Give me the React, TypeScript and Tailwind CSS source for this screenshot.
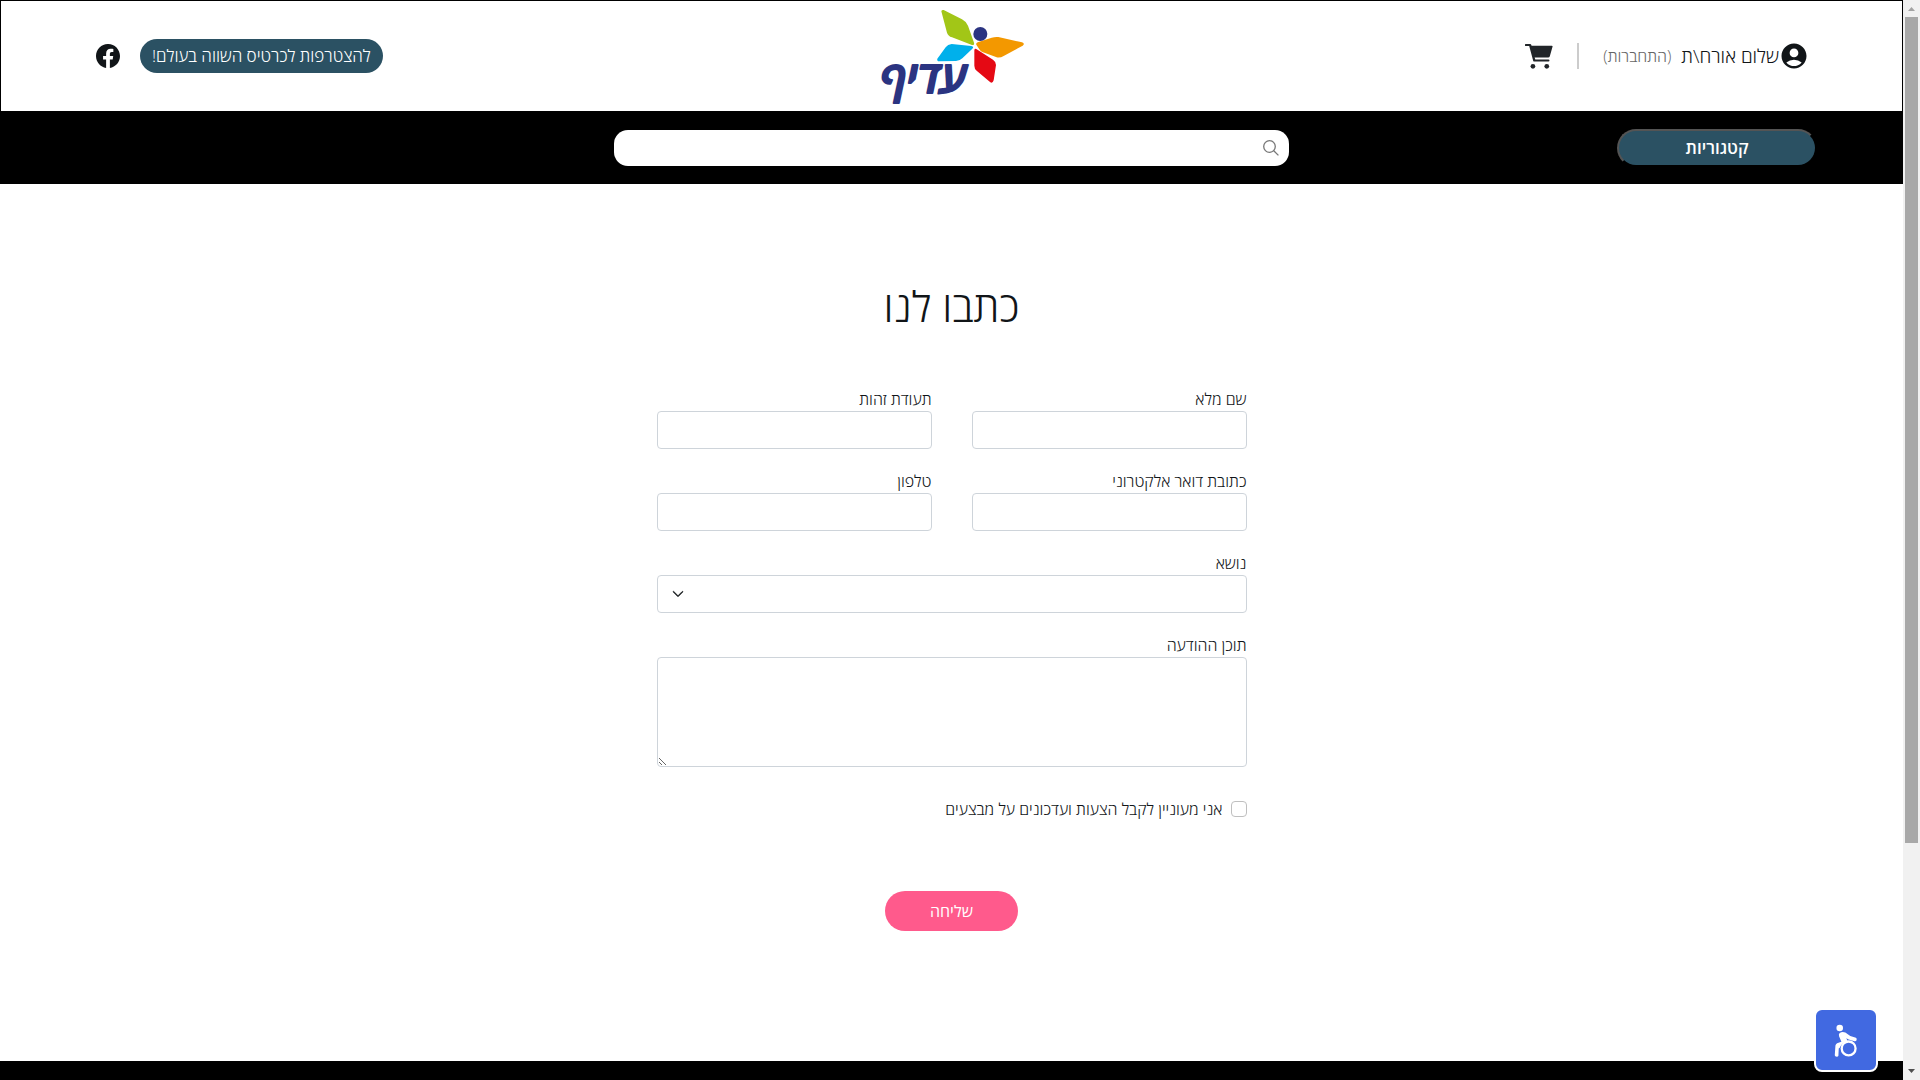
import type { ReactNode } from "react";
import { BsChevronDown, BsFacebook } from "react-icons/bs";
import { MdAccountCircle } from "react-icons/md";

const inputClass =
  "block w-full rounded border border-[#ced4da] bg-white px-3 focus:outline-none focus:ring-2 focus:ring-sky-300";

interface FieldProps {
  id: string;
  label: string;
  className?: string;
  children: ReactNode;
}

function Field({ id, label, className, children }: FieldProps) {
  return (
    <div className={className}>
      <label htmlFor={id} className="block leading-6">
        {label}
      </label>
      {children}
    </div>
  );
}

function Logo() {
  return (
    <svg viewBox="48 24 456 288" className="h-24 w-[152px] overflow-visible" role="img" aria-label="עדיף">
      <path d="M244 34Q245 29 251 30L306 58Q319 65 324 77L342 128Q344 136 336 135L276 112Q264 108 261 98Z" fill="#a2c617" />
      <path d="M232 176L257 142Q263 133 275 132L334 138Q343 140 337 146L307 175Q299 183 288 183L237 184Q230 183 232 176Z" fill="#00b0eb" />
      <path d="M349 134Q347 130 353 127L395 113Q405 110 415 111L486 127Q496 131 488 137L431 168Q421 174 410 172L369 157Q362 154 359 149Z" fill="#f39800" />
      <path d="M343 151Q344 144 350 148L399 179Q408 185 408 195L401 241Q398 251 391 247L350 212Q343 206 343 197Z" fill="#e50914" />
      <circle cx="361" cy="102" r="21" fill="#2b3481" />
      <text
        x="191"
        y="278"
        textAnchor="middle"
        direction="rtl"
        fill="#2b3481"
        stroke="#2b3481"
        strokeWidth="6"
        strokeLinejoin="round"
        className="font-['Open_Sans',sans-serif] text-[130px] font-semibold italic"
      >
        עדיף
      </text>
    </svg>
  );
}

function CartIcon() {
  return (
    <svg viewBox="76 71 82 74" className="h-[25px] w-7" fill="#212529">
      <path d="M78 71H91Q93 71 94 73L95 76H155Q158 76 157 79L149 107Q148 111 144 111H104L106 117H145Q148 117 148 120T145 123H103Q101 123 100 121L88 77H78Q75 77 75 74T78 71Z" />
      <circle cx="99" cy="137" r="7" />
      <circle cx="140" cy="137" r="7" />
    </svg>
  );
}

function WheelchairIcon() {
  return (
    <svg viewBox="166 130 72 100" className="h-[33px] w-6" fill="#fff">
      <circle cx="183" cy="142" r="10" />
      <path d="M183 157Q191 152 200 156L215 166L232 172Q236 175 234 179T228 182L210 177L203 173L207 182Q190 185 183 202L180 204L179 226Q178 229 174 229Q168 229 168 225L170 195Q171 190 175 188L188 184L181 167Q179 160 183 157Z" />
      <circle cx="210" cy="204" r="21" fill="none" stroke="#fff" strokeWidth="7" />
    </svg>
  );
}

function Header() {
  return (
    <header className="grid h-[111px] grid-cols-[1fr_auto_1fr] items-center border border-b-0 border-black px-[95px]">
      <div className="flex items-center">
        <a href="#login" className="flex items-center gap-[10px] font-light">
          <span className="flex items-center text-[19px] leading-6">
            <MdAccountCircle className="-mr-0.5 size-[30px]" />
            שלום אורח\ת
          </span>
          <span className="text-[#666]">(התחברות)</span>
        </a>
        <span className="mx-6 h-[26px] w-0.5 bg-[#ccc]" />
        <a href="#cart" aria-label="עגלת קניות">
          <CartIcon />
        </a>
      </div>
      <Logo />
      <div className="flex items-center justify-end gap-5">
        <a href="#join" className="rounded-full bg-[#2b5163] px-3 py-[5px] text-[17px] leading-6 font-light text-white">
          להצטרפות לכרטיס השווה בעולם!
        </a>
        <a href="#facebook" aria-label="פייסבוק">
          <BsFacebook className="size-6" />
        </a>
      </div>
    </header>
  );
}

function NavBar() {
  return (
    <nav className="grid h-[73px] grid-cols-[1fr_675px_1fr] items-center bg-black px-[86px]">
      <div>
        <button
          type="button"
          className="h-[38px] w-[200px] rounded-full border-2 border-black bg-[#2b5163] text-[17px] leading-6 font-semibold text-white [border-style:outset]"
        >
          קטגוריות
        </button>
      </div>
      <form className="flex h-9 items-center rounded-[14px] bg-white pr-2.5 pl-4">
        <svg viewBox="0 0 16 16" className="size-4" fill="none" stroke="#777" strokeWidth="1.3">
          <ellipse cx="6.5" cy="6.5" rx="5.8" ry="5.8" />
          <path d="M10.5 10.5L15.4 15.4" />
        </svg>
        <input type="search" aria-label="חיפוש" className="h-full flex-1 px-2 focus:outline-none" />
      </form>
    </nav>
  );
}

function ContactForm() {
  return (
    <main className="flex flex-1 flex-col items-center pt-[92px] pb-[130px]">
      <h1 className="mb-[51px] text-[42px] leading-[60px] font-light">כתבו לנו</h1>
      <form className="flex w-[590px] flex-col items-center">
        <div className="grid w-full grid-cols-2 gap-x-10 gap-y-5 font-light">
          <Field id="name" label="שם מלא">
            <input id="name" type="text" className={`${inputClass} h-[38px]`} />
          </Field>
          <Field id="idNumber" label="תעודת זהות">
            <input id="idNumber" type="text" className={`${inputClass} h-[38px]`} />
          </Field>
          <Field id="email" label="כתובת דואר אלקטרוני">
            <input id="email" type="email" className={`${inputClass} h-[38px]`} />
          </Field>
          <Field id="phone" label="טלפון">
            <input id="phone" type="tel" className={`${inputClass} h-[38px]`} />
          </Field>
          <Field id="subject" label="נושא" className="col-span-2">
            <div className="relative">
              <select id="subject" className={`${inputClass} h-[38px] appearance-none`}>
                <option></option>
              </select>
              <BsChevronDown className="pointer-events-none absolute top-[13px] left-[15px] size-3 stroke-1" />
            </div>
          </Field>
          <Field id="message" label="תוכן ההודעה" className="col-span-2">
            <textarea id="message" className={`${inputClass} h-[110px] resize py-1.5`} />
          </Field>
        </div>
        <label className="mt-[30px] flex items-center gap-2 self-start leading-6 font-light">
          <input
            type="checkbox"
            className="size-4 appearance-none rounded border border-[#bfbfbf] bg-white checked:bg-sky-500"
          />
          אני מעוניין לקבל הצעות ועדכונים על מבצעים
        </label>
        <button type="submit" className="mt-[70px] h-10 w-[133px] rounded-full bg-[#ff5a8c] leading-6 text-white">
          שליחה
        </button>
      </form>
    </main>
  );
}

function ScrollBar() {
  return (
    <div className="flex w-[17px] shrink-0 flex-col items-center bg-[#f1f1f1]" aria-hidden="true">
      <svg viewBox="0 0 17 17" className="size-[17px]" fill="#a3a3a3">
        <path d="M5 11L8.500 7L12 11Z" />
      </svg>
      <div className="w-[13px] flex-[826] bg-[#a8a8a8]" />
      <div className="flex-[220]" />
      <svg viewBox="0 0 17 17" className="size-[17px]" fill="#505050">
        <path d="M5 6L8.500 10L12 6Z" />
      </svg>
    </div>
  );
}

export default function App() {
  return (
    <div className="flex min-h-screen bg-white font-['Open_Sans','Noto_Sans',sans-serif] text-base text-[#111518]">
      <div dir="rtl" className="flex min-w-0 flex-1 flex-col">
        <Header />
        <NavBar />
        <ContactForm />
        <footer className="h-[19px] bg-black" />
      </div>
      <ScrollBar />
      <button
        type="button"
        aria-label="נגישות"
        className="fixed right-[42px] bottom-2 flex size-16 items-center justify-center rounded-lg border-2 border-white bg-[#4169e1]"
      >
        <WheelchairIcon />
      </button>
    </div>
  );
}
